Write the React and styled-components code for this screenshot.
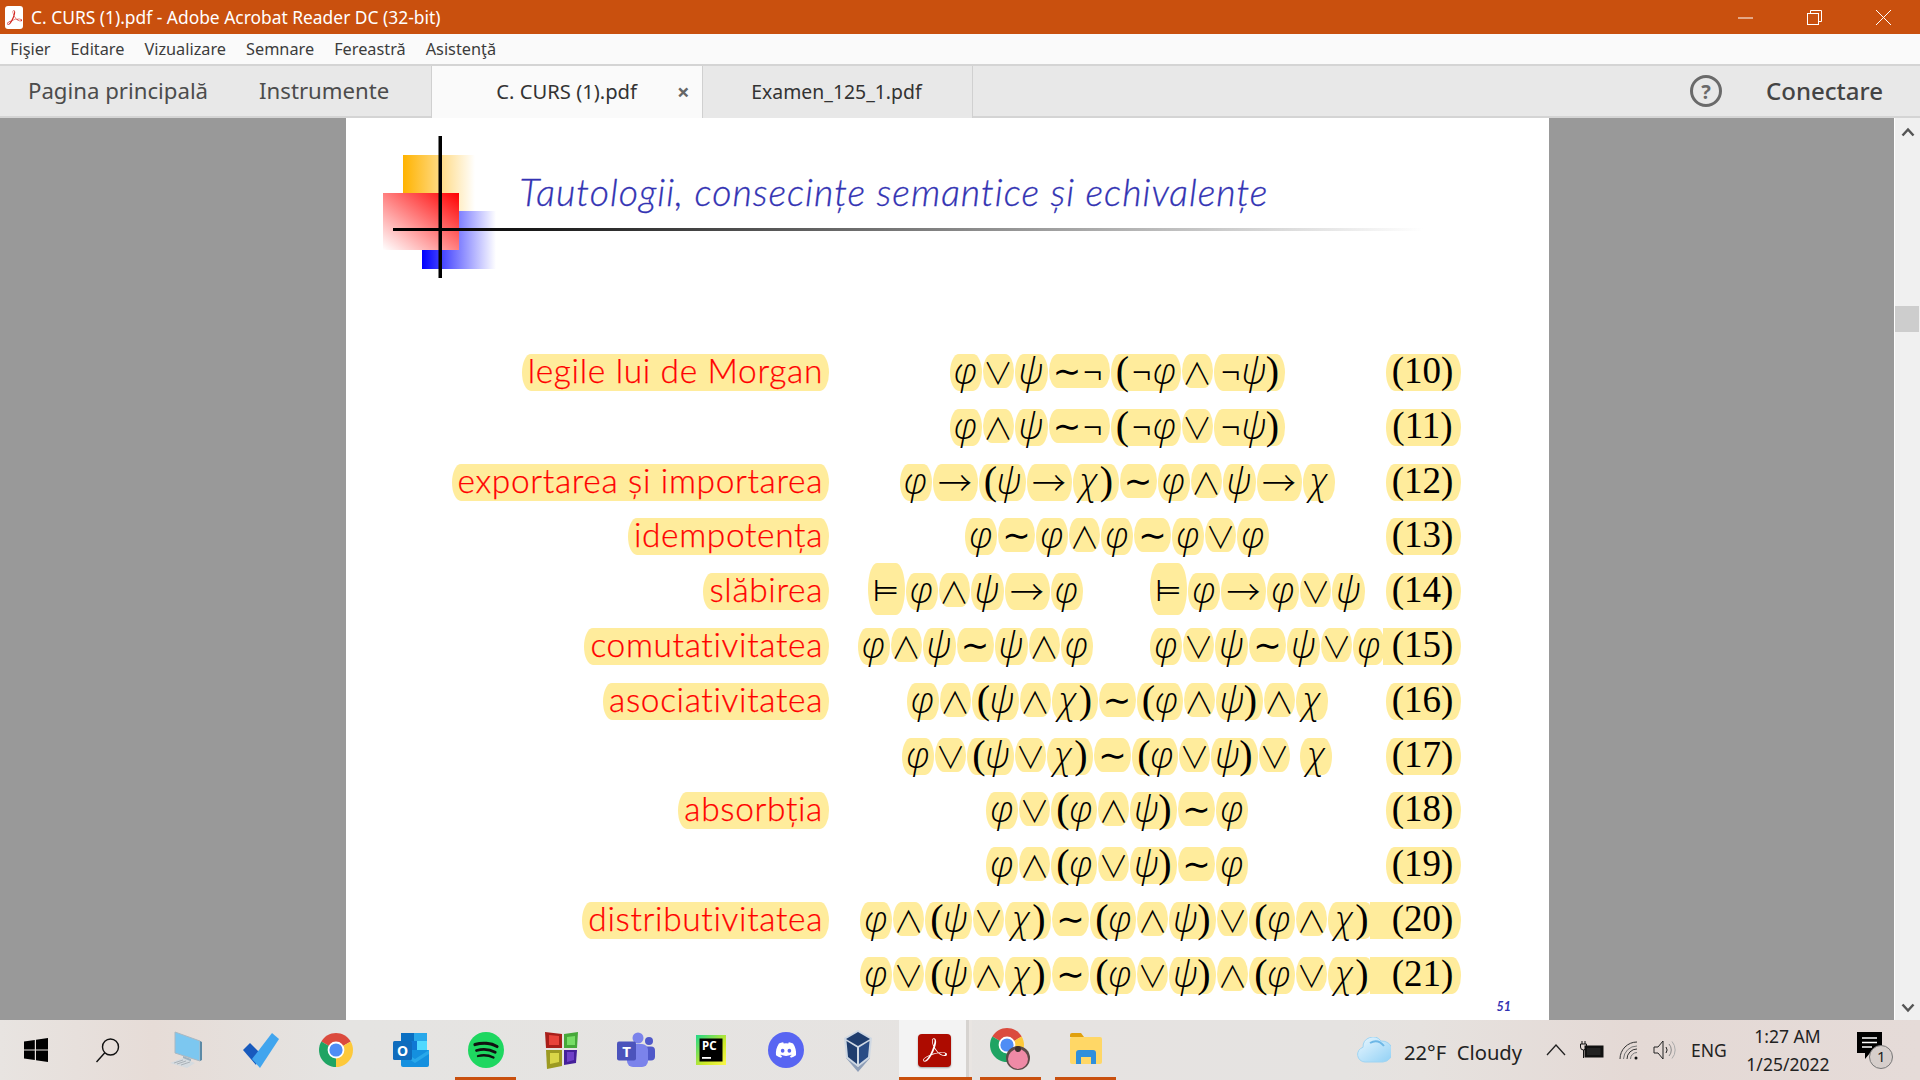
import React from 'react';
import styled, { createGlobalStyle } from 'styled-components';
import { SiAdobeacrobatreader } from 'react-icons/si';
import { FaDiscord } from 'react-icons/fa6';

const Global = createGlobalStyle`
  html, body { margin: 0; padding: 0; width: 1920px; height: 1080px; overflow: hidden; background: #999; }
  * { box-sizing: border-box; }
`;
const UI = `"Noto Sans", "Open Sans", sans-serif`;
const CJK = `"Noto Sans CJK JP", "DejaVu Sans", sans-serif`;
const SERIF = `"Liberation Serif", serif`;
const GREEK = `"Open Sans", "Noto Sans", sans-serif`;
const DEJAVU = `"DejaVu Sans", sans-serif`;

const Shell = styled.div`display:flex;flex-direction:column;width:1920px;height:1080px;font-family:${UI};`;
const TitleBar = styled.header`height:34px;background:#c9500e;color:#fff;display:flex;align-items:center;padding-left:5px;flex:none;`;
const AppBadge = styled.span`width:18px;height:23px;border-radius:3px;background:#fff;display:flex;align-items:center;justify-content:center;color:#d0201a;font-size:15px;`;
const TitleText = styled.span`font-size:17.4px;margin-left:8px;flex:1;white-space:nowrap;`;
const WinControls = styled.div`display:flex;align-items:center;gap:54px;padding-right:29px;`;
const MenuBar = styled.nav`height:30px;background:#fafafa;display:flex;align-items:center;padding-left:10px;gap:20px;font-size:16.3px;color:#3c3c3c;flex:none;`;
const TabBar = styled.div`height:54px;background:#e8e8e8;border-top:2px solid #d4d4d4;border-bottom:2px solid #d4d4d4;display:flex;align-items:stretch;flex:none;color:#4c4c4c;`;
const NavTab = styled.div`display:flex;align-items:center;font-size:22.2px;margin-left:${p => p.$ml}px;white-space:nowrap;padding-bottom:2px;`;
const DocTab = styled.div`
  width:${p => p.$w}px;display:flex;align-items:center;font-size:${p => p.$size}px;white-space:nowrap;padding:0 0 2px ${p => p.$pl}px;margin-bottom:-2px;
  background:${p => (p.$active ? '#fafafa' : '#e8e8e8')};
  border-left:${p => (p.$active ? '1px solid #d0d0d0' : 'none')};
  border-right:1px solid #d0d0d0;
  color:#333;
`;
const CloseX = styled.span`margin-left:40px;font-size:22px;font-weight:700;color:#666;`;
const Spacer = styled.div`flex:1;`;
const Help = styled.div`width:32px;height:32px;border:3px solid #6a6a6a;border-radius:50%;align-self:center;display:flex;align-items:center;justify-content:center;font-size:20px;font-weight:700;color:#6a6a6a;margin-right:44px;`;
const Connect = styled.div`align-self:center;font-size:24px;font-weight:500;margin-right:37px;color:#444;padding-bottom:2px;`;

const Workspace = styled.main`flex:1;min-height:0;display:flex;background:#999;overflow:hidden;`;
const Gutter = styled.div`flex:${p => (p.$w ? `0 0 ${p.$w}px` : 1)};`;
const Page = styled.section`width:1203px;background:#fff;height:902px;overflow:hidden;flex:none;padding-top:18px;`;
const Head = styled.div`display:flex;padding-left:37px;`;
const Logo = styled.svg`flex:none;overflow:visible;display:block;`;
const SlideTitle = styled.h1`margin:33px 0 0 23.500px;font:italic 300 37.5px/46px Lato, sans-serif;color:#3333b3;white-space:nowrap;height:46px;letter-spacing:1px;-webkit-text-stroke:.3px #3333b3;`;
const Rows = styled.div`margin-top:76px;display:grid;grid-auto-rows:54.8px;`;
const Row = styled.div`display:grid;grid-template-columns:483px 19px 538px 75px;align-items:start;`;
const LabelCell = styled.div`display:flex;justify-content:flex-end;grid-column:1;`;
const Label = styled.span`
  background:#ffec9c;color:#ff0000;height:37px;padding:0 6px;border-radius:9px / 50%;
  font:300 33.5px/32px Lato, sans-serif;letter-spacing:.65px;white-space:nowrap;-webkit-text-stroke:.25px #ff0000;
`;
const Formula = styled.div`grid-column:3;display:flex;justify-content:center;gap:1px;height:37px;`;
const PairCell = styled.div`grid-column:3;display:grid;grid-template-columns:254px 1fr;column-gap:48px;`;
const Half = styled.div`display:flex;gap:1px;height:37px;justify-content:${p => (p.$left ? 'flex-start' : 'center')};`;
const Atom = styled.span`
  display:inline-flex;justify-content:center;background:#ffec9c;padding:0 5px;flex:none;
  height:${p => p.$h}px;margin-top:${p => p.$top}px;border-radius:9px / 50%;
  margin-right:${p => p.$mr || 0}px;
`;
const Glyph = styled.span`
  display:inline-flex;justify-content:center;width:${p => p.$w}px;color:#000;line-height:${p => p.$lh || 33}px;height:37px;white-space:nowrap;
  font-family:${p => p.$font};
  font-size:${p => p.$size}px;font-style:${p => (p.$it ? 'italic' : 'normal')};
  font-weight:${p => p.$wt || 400};
`;
const Num = styled.div`
  grid-column:4;height:37px;background:#ffec9c;border-radius:${p => (p.$ext ? '0 9px 9px 0 / 0 50% 50% 0' : '9px / 50%')};text-align:center;
  margin-left:${p => -(p.$ext || 0)}px;padding:0 2px 0 ${p => p.$ext || 0}px;
  font:400 37px/33px "Liberation Serif", serif;color:#000;
`;
const PageNo = styled.div`text-align:right;padding-right:38px;margin-top:-12px;font:italic 700 12.5px/14px Lato, sans-serif;color:#3333b3;`;

const Scroll = styled.aside`flex:0 0 26px;background:#f0f0f0;border-left:1px solid #fff;display:flex;flex-direction:column;align-items:center;padding-top:9px;`;
const Thumb = styled.div`width:24px;height:26px;background:#cdcdcd;margin:169px 1px 0 0;`;

const Taskbar = styled.footer`height:60px;flex:none;display:flex;align-items:stretch;
  background:linear-gradient(90deg,#e8e4e1 0%,#e6dcd7 8%,#e5e4e2 18%,#e6e3e1 55%,#e5e3e1 70%,#e6e2df 74%,#e4d9d5 85%,#e5dbd8 100%);`;
const StartBtn = styled.div`width:72px;display:flex;align-items:center;justify-content:center;flex:none;`;
const TaskIcons = styled.div`display:flex;gap:14px;margin-left:11px;`;
const TaskBtn = styled.div`
  width:${p => p.$w || 61}px;display:flex;align-items:center;justify-content:center;flex:none;
  margin:0 ${p => p.$mx || 0}px;padding-right:${p => p.$pr || 0}px;
  border-bottom:3px solid ${p => (p.$on ? '#c9500e' : 'transparent')};
  border-top:3px solid transparent;
  background:${p => (p.$hi ? 'linear-gradient(90deg,#f3f3f3 0,#f3f3f3 67px,#d6d3d0 67px,#d6d3d0 70px,#e9e5e2 70px)' : 'transparent')};
`;
const AcroIcon = styled.div`width:33px;height:33px;background:#ad0b00;border-radius:4px;color:#fff;display:flex;align-items:center;justify-content:center;font-size:24px;box-shadow:0 1px 2px #0005;margin-left:2px;`;
const DiscordIcon = styled.div`width:36px;height:36px;background:#5865f2;border-radius:50%;color:#fff;display:flex;align-items:center;justify-content:center;font-size:22px;`;
const Tray = styled.div`flex:1;display:flex;align-items:center;color:#111;padding-left:${p => p.$pl}px;`;
const Weather = styled.span`font-size:20.2px;margin-left:13px;white-space:pre;margin-top:3px;color:#222;`;
const TrayGap = styled.span`display:inline-flex;margin-left:${p => p.$ml}px;`;
const Lang = styled.span`font-size:17.5px;margin-left:15px;color:#222;`;
const Clock = styled.div`margin-left:19.5px;width:82px;text-align:center;font-size:17.5px;line-height:28px;color:#222;white-space:nowrap;`;
const NotifyWrap = styled.div`margin-left:29px;position:relative;width:36px;height:36px;`;
const Badge = styled.span`position:absolute;right:0;bottom:-1px;width:24px;height:24px;border-radius:50%;border:1.5px solid #777;background:#d6cecb;font-size:15px;line-height:21px;text-align:center;color:#222;`;

const SPEC = {
  'φ': { w: 22, it: 1, size: 36, font: GREEK, wt: 300 }, 'ψ': { w: 23, it: 1, size: 36, font: GREEK, wt: 300 }, 'χ': { w: 22, it: 1, size: 36, font: GREEK, wt: 300 },
  '∨': { w: 21, size: 30, font: CJK, wt: 300, lh: 35 }, '∧': { w: 21, size: 30, font: CJK, wt: 300, lh: 35 }, '∼': { w: 27, size: 34, font: DEJAVU, lh: 35 },
  '→': { w: 35, size: 34, font: CJK, wt: 300, lh: 35 }, '(': { w: 14, size: 40, font: SERIF, lh: 33 }, ')': { w: 14, size: 40, font: SERIF, lh: 33 },
  '¬': { w: 24, size: 34, font: SERIF, lh: 35 }, '⊨': { w: 27, size: 30, font: DEJAVU, lh: 35 },
};
const SHORT = new Set(['∨', '∧']);
function Tok({ t }) {
  const gap = t.endsWith('_');
  const chars = Array.from(gap ? t.slice(0, -1) : t);
  const single = chars.length === 1 ? chars[0] : null;
  const turn = single === '⊨';
  const h = turn ? 52 : single && SHORT.has(single) ? 34 : single === '∼' || t === '∼¬' ? 34 : 37;
  return (
    <Atom $h={h} $top={turn ? -10 : 0} $mr={gap ? 9 : 0}>
      {chars.map((c, i) => {
        const s = SPEC[c];
        return <Glyph key={i} $w={s.w} $it={s.it} $font={s.font} $wt={s.wt} $lh={s.lh} $size={s.size} style={turn ? { marginTop: 10 } : undefined}>{c}</Glyph>;
      })}
    </Atom>
  );
}
const toks = s => s.split(' ').map((t, i) => <Tok key={i} t={t} />);

const DATA = [
  ['legile lui de Morgan', 'φ ∨ ψ ∼¬ (¬φ ∧ ¬ψ)', '(10)'],
  ['', 'φ ∧ ψ ∼¬ (¬φ ∨ ¬ψ)', '(11)'],
  ['exportarea și importarea', 'φ → (ψ → χ) ∼ φ ∧ ψ → χ', '(12)'],
  ['idempotența', 'φ ∼ φ ∧ φ ∼ φ ∨ φ', '(13)'],
  ['slăbirea', ['⊨ φ ∧ ψ → φ', '⊨ φ → φ ∨ ψ'], '(14)'],
  ['comutativitatea', ['φ ∧ ψ ∼ ψ ∧ φ', 'φ ∨ ψ ∼ ψ ∨ φ'], '(15)', 3],
  ['asociativitatea', 'φ ∧ (ψ ∧ χ) ∼ (φ ∧ ψ) ∧ χ', '(16)'],
  ['', 'φ ∨ (ψ ∨ χ) ∼ (φ ∨ ψ) ∨_ χ', '(17)'],
  ['absorbția', 'φ ∨ (φ ∧ ψ) ∼ φ', '(18)'],
  ['', 'φ ∧ (φ ∨ ψ) ∼ φ', '(19)'],
  ['distributivitatea', 'φ ∧ (ψ ∨ χ) ∼ (φ ∧ ψ) ∨ (φ ∧ χ)', '(20)', 16],
  ['', 'φ ∨ (ψ ∧ χ) ∼ (φ ∨ ψ) ∧ (φ ∨ χ)', '(21)', 16],
];

const LogoArt = () => (
  <Logo width="113" height="142" viewBox="0 0 113 142">
    <defs>
      <linearGradient id="o" x1="0" x2="1" y1="0" y2="0"><stop offset="0" stopColor="#ffb300" /><stop offset="1" stopColor="#fff" /></linearGradient>
      <linearGradient id="b" x1="0" x2="1" y1="0" y2="0"><stop offset="0" stopColor="#0000ff" /><stop offset="1" stopColor="#fff" /></linearGradient>
      <linearGradient id="r" x1="1" x2="0" y1="0" y2="1"><stop offset="0" stopColor="#ff0000" /><stop offset="1" stopColor="#fff" /></linearGradient>
      <linearGradient id="l" gradientUnits="userSpaceOnUse" x1="50" x2="1040" y1="0" y2="0"><stop offset="0" stopColor="#000" /><stop offset="1" stopColor="#fff" /></linearGradient>
    </defs>
    <rect x="20" y="19" width="72" height="76" fill="url(#o)" />
    <rect x="39" y="75" width="74" height="58" fill="url(#b)" />
    <rect x="0" y="57" width="76" height="57" fill="url(#r)" />
    <rect x="10" y="92" width="1030" height="3" fill="url(#l)" />
    <rect x="55.5" y="0" width="3.500" height="142" fill="#000" />
  </Logo>
);

const WinBtns = () => (
  <WinControls>
    <svg width="15" height="15" viewBox="0 0 15 15"><path d="M0 8h15" stroke="#fff" strokeWidth="1" /></svg>
    <svg width="15" height="15" viewBox="0 0 15 15" fill="none" stroke="#fff"><rect x=".5" y="3.5" width="11" height="11" /><path d="M3.500 3V.5h11v11H12" /></svg>
    <svg width="15" height="15" viewBox="0 0 15 15" stroke="#fff"><path d="M0 0l15 15M15 0L0 15" /></svg>
  </WinControls>
);

const Ic = {
  Windows: () => <svg width="24" height="24" viewBox="0 0 24 24" fill="#000"><path d="M0 3.400 10.800 2v9.400H0zM12 1.800 24 0v11.400H12zM0 12.600h10.800V22L0 20.600zM12 12.600h12V24l-12-1.800z" /></svg>,
  Search: () => <svg width="26" height="26" viewBox="0 0 26 26" fill="none" stroke="#111" strokeWidth="1.400"><circle cx="15.500" cy="10" r="8" /><path d="M9.800 15.800 1.500 25" /></svg>,
  PC: () => <svg width="34" height="38" viewBox="0 0 34 38"><path d="M6 1l25 9v20L6 22z" fill="#7cc7f0" stroke="#aab8c2" /><path d="M31 10v20l2-1V11z" fill="#5c8aa6" /><path d="M14 25l8 3v3l-8-2z" fill="#9fb2bf" /><path d="M1 32l13-5 12 5-8 5z" fill="#d5dbe0" /><path d="M5 32l9-3M8 33l9-3M12 34l9-3" stroke="#aab2b8" /></svg>,
  Todo: () => <svg width="36" height="36" viewBox="0 0 36 36"><path d="M0 18l7-7 10 10-4 12z" fill="#185abd" /><path d="M17 36 9 27 29 1l7 6z" fill="#41a5ee" /></svg>,
  Chrome: ({ s = 34 }) => (
    <svg width={s} height={s} viewBox="0 0 34 34">
      <path d="M2.300 8.500A17 17 0 0 1 31.700 8.500L17 17z" fill="#db4b3e" />
      <path d="M31.700 8.500A17 17 0 0 1 17 34L17 17z" fill="#fdc93b" />
      <path d="M17 34A17 17 0 0 1 2.300 8.500L17 17z" fill="#1fa463" />
      <circle cx="17" cy="17" r="8.400" fill="#fff" /><circle cx="17" cy="17" r="6.600" fill="#4f8df5" />
    </svg>
  ),
  Outlook: () => <svg width="36" height="36" viewBox="0 0 36 36"><rect x="8" y="1" width="26" height="16" fill="#0a6fc2" /><rect x="21" y="1" width="13" height="9" fill="#28a8ea" /><rect x="14" y="9" width="10" height="9" fill="#0f78d4" /><rect x="24" y="9" width="10" height="9" fill="#50d9ff" /><path d="M8 18h28v15a2 2 0 0 1-2 2H10a2 2 0 0 1-2-2z" fill="#1490df" /><path d="M8 18l14 9 14-9v4l-14 9-14-9z" fill="#28a8ea" /><rect x="0" y="9" width="19" height="19" rx="1.500" fill="#0f6cbd" /><text x="9.500" y="24" textAnchor="middle" fontSize="14" fontWeight="700" fill="#fff" fontFamily="Noto Sans">O</text></svg>,
  Spotify: () => <svg width="36" height="36" viewBox="0 0 36 36"><circle cx="18" cy="18" r="18" fill="#1ed760" /><g fill="none" stroke="#111" strokeLinecap="round"><path d="M7 12.500c7-2 16-1.600 22 2" strokeWidth="3.200" /><path d="M8.500 18.500c6-1.600 13.500-1 18.700 1.800" strokeWidth="2.800" /><path d="M10 24c5-1.200 11-.7 15.500 1.600" strokeWidth="2.300" /></g></svg>,
  Cube: () => <svg width="34" height="38" viewBox="0 0 34 38"><path d="M1 1l17 2v14H2z" fill="#a81f1a" /><path d="M5 4l10 1v9H5z" fill="#e8433a" /><path d="M20 3l14-2-1 16H20z" fill="#46a83a" /><path d="M23 6l8-1v9h-8z" fill="#77dd66" /><path d="M2 19h16v16l-15 3z" fill="#9c9a22" /><path d="M6 22h9v9l-9 2z" fill="#d9d648" /><path d="M20 19h13l-1 13-12 2z" fill="#45209a" /><path d="M23 21h7v8l-7 2z" fill="#7040c8" /></svg>,
  Teams: () => <svg width="38" height="36" viewBox="0 0 38 36"><circle cx="21" cy="6" r="5.500" fill="#7b83eb" /><circle cx="32" cy="9" r="4" fill="#5059c9" /><rect x="26" y="14.500" width="12" height="14" rx="4" fill="#5059c9" /><rect x="10" y="12" width="21" height="23" rx="6" fill="#7b83eb" /><rect x="0" y="9.500" width="19" height="19" rx="2" fill="#4b53bc" /><text x="9.500" y="24.500" textAnchor="middle" fontSize="15" fontWeight="700" fill="#fff" fontFamily="Noto Sans">T</text></svg>,
  PyCharm: () => <svg width="30" height="30" viewBox="0 0 30 30"><defs><linearGradient id="pc" x1="0" y1="0" x2="1" y2="1"><stop offset="0" stopColor="#21d789" /><stop offset=".6" stopColor="#cce82a" /><stop offset="1" stopColor="#fcf84a" /></linearGradient></defs><rect width="30" height="30" fill="url(#pc)" /><rect x="3.500" y="3.500" width="23" height="23" fill="#000" /><text x="6" y="15" fontSize="11.500" fontWeight="700" fill="#fff" fontFamily="Noto Sans">PC</text><rect x="6" y="22" width="9" height="1.800" fill="#fff" /></svg>,
  VBox: () => <svg width="30" height="44" viewBox="0 0 30 44" style={{ marginLeft: -6 }}><path d="M3 24l12 15 12-15v6L15 44 3 30z" fill="#8f9fb8" /><path d="M15 2l14 8-2 20-12 9-12-9-2-20z" fill="#cfd8e3" /><path d="M15 4 3 11l12 7 12-7z" fill="#1f3d6e" /><path d="M3.500 13l10.500 6.500V36l-9-7z" fill="#1f3d6e" /><path d="M26.500 13 16 19.500V36l9-7z" fill="#2a4d86" /></svg>,
  Avatar: () => <svg width="42" height="46" viewBox="0 0 42 46"><g transform="translate(0,1)"><path d="M2.300 8.500A17 17 0 0 1 31.700 8.500L17 17z" fill="#db4b3e" /><path d="M31.700 8.500A17 17 0 0 1 17 34L17 17z" fill="#fdc93b" /><path d="M17 34A17 17 0 0 1 2.300 8.500L17 17z" fill="#1fa463" /><circle cx="17" cy="17" r="8.400" fill="#fff" /><circle cx="17" cy="17" r="6.600" fill="#4f8df5" /></g><circle cx="28" cy="31" r="12" fill="#5b4a48" /><circle cx="28" cy="32" r="10" fill="#ef8aa6" /><circle cx="28" cy="22" r="3" fill="#3a2e2d" /></svg>,
  Folder: () => <svg width="34" height="34" viewBox="0 0 34 34"><path d="M1 2a2 2 0 0 1 2-2h9l3 4h-14z" fill="#e0a00d" /><rect x="1" y="4" width="32" height="27" rx="2" fill="#ffd766" /><path d="M7 31V20a3 3 0 0 1 3-3h14a3 3 0 0 1 3 3v11h-5v-7H12v7z" fill="#2f8fdc" /></svg>,
  Cloud: () => <svg width="34" height="26" viewBox="0 0 34 26"><defs><linearGradient id="cl" x1="0" y1="0" x2="1" y2="1"><stop offset="0" stopColor="#eaf7ff" /><stop offset="1" stopColor="#8fd0f5" /></linearGradient></defs><path d="M8 25a7.500 7.500 0 0 1-2-14.700A10 10 0 0 1 24 4a8 8 0 0 1 2 21z" fill="url(#cl)" stroke="#9fd4f2" /><path d="M13 6c5-3 10-2 14 3" stroke="#6db7e6" strokeWidth="2" fill="none" /></svg>,
  Chevron: () => <svg width="20" height="12" viewBox="0 0 20 12" fill="none" stroke="#222" strokeWidth="1.300"><path d="M1 11 10 1l9 10" /></svg>,
  Battery: () => <svg width="25" height="18" viewBox="0 0 25 18"><path d="M3 0v3M6 0v3M1.500 3h6v3a3 3 0 0 1-6 0zM4.500 9v8" stroke="#111" fill="none" /><rect x="6" y="5" width="18" height="11" fill="#111" stroke="#111" /><rect x="8" y="7" width="13.500" height="7" fill="#222" /></svg>,
  Wifi: () => <svg width="19" height="19" viewBox="0 0 19 19" fill="none" stroke="#333"><path d="M1 18A17 17 0 0 1 18 1" /><path d="M4.500 18A13.500 13.500 0 0 1 18 5" stroke="#777" /><path d="M8 18A10 10 0 0 1 18 8" stroke="#333" /><path d="M11.500 18A6.500 6.500 0 0 1 18 11.500" stroke="#777" /><circle cx="17" cy="17" r="1.500" fill="#111" stroke="none" /></svg>,
  Volume: () => <svg width="23" height="20" viewBox="0 0 23 20" fill="none" stroke="#222"><path d="M1 7h4l5-6v18l-5-6H1z" /><path d="M13 7a5 5 0 0 1 0 6" /><path d="M16 4a9 9 0 0 1 0 12" stroke="#888" /><path d="M19 1.500a13 13 0 0 1 0 17" stroke="#aaa" /></svg>,
  Bubble: () => <svg width="25" height="30" viewBox="0 0 25 30"><path d="M0 0h25v21H13l-5 6v-6H0z" fill="#000" /><path d="M5 6h15M5 10.500h15M5 15h10" stroke="#fff" strokeWidth="1.300" /></svg>,
};

export default function App() {
  return (
    <Shell>
      <Global />
      <TitleBar>
        <AppBadge><SiAdobeacrobatreader /></AppBadge>
        <TitleText>C. CURS (1).pdf - Adobe Acrobat Reader DC (32-bit)</TitleText>
        <WinBtns />
      </TitleBar>
      <MenuBar>
        {['Fişier', 'Editare', 'Vizualizare', 'Semnare', 'Fereastră', 'Asistenţă'].map(m => <span key={m}>{m}</span>)}
      </MenuBar>
      <TabBar>
        <NavTab $ml={28}>Pagina principală</NavTab>
        <NavTab $ml={51}>Instrumente</NavTab>
        <Gutter $w={42} />
        <DocTab $active $w={272} $pl={64} $size={20.2}>C. CURS (1).pdf<CloseX>×</CloseX></DocTab>
        <DocTab $w={270} $pl={48} $size={19.4}>Examen_125_1.pdf</DocTab>
        <Spacer />
        <Help>?</Help>
        <Connect>Conectare</Connect>
      </TabBar>
      <Workspace>
        <Gutter $w={346} />
        <Page>
          <Head>
            <LogoArt />
            <SlideTitle>Tautologii, consecințe semantice și echivalențe</SlideTitle>
          </Head>
          <Rows>
            {DATA.map(([label, f, n, ext], i) => (
              <Row key={i}>
                <LabelCell>{label && <Label>{label}</Label>}</LabelCell>
                {Array.isArray(f) ? (
                  <PairCell>
                    <Half>{toks(f[0])}</Half>
                    <Half $left>{toks(f[1])}</Half>
                  </PairCell>
                ) : (
                  <Formula>{toks(f)}</Formula>
                )}
                <Num $ext={ext}>{n}</Num>
              </Row>
            ))}
          </Rows>
          <PageNo>51</PageNo>
        </Page>
        <Gutter />
        <Scroll>
          <svg width="14" height="10" viewBox="0 0 14 10" fill="none" stroke="#555" strokeWidth="2.500"><path d="M1.500 8.500 7 2.500l5.500 6" /></svg>
          <Thumb />
          <Spacer />
          <svg width="14" height="10" viewBox="0 0 14 10" fill="none" stroke="#555" strokeWidth="2.500" style={{ marginBottom: 7 }}><path d="M1.500 1.500 7 7.500l5.500-6" /></svg>
        </Scroll>
      </Workspace>
      <Taskbar>
        <StartBtn><Ic.Windows /></StartBtn>
        <StartBtn><Ic.Search /></StartBtn>
        <TaskIcons>
          <TaskBtn><Ic.PC /></TaskBtn>
          <TaskBtn><Ic.Todo /></TaskBtn>
          <TaskBtn><Ic.Chrome /></TaskBtn>
          <TaskBtn><Ic.Outlook /></TaskBtn>
          <TaskBtn $on><Ic.Spotify /></TaskBtn>
          <TaskBtn><Ic.Cube /></TaskBtn>
          <TaskBtn><Ic.Teams /></TaskBtn>
          <TaskBtn><Ic.PyCharm /></TaskBtn>
          <TaskBtn><DiscordIcon><FaDiscord /></DiscordIcon></TaskBtn>
          <TaskBtn><Ic.VBox /></TaskBtn>
          <TaskBtn $w={73} $mx={-6} $on $hi $pr={4}><AcroIcon><SiAdobeacrobatreader /></AcroIcon></TaskBtn>
          <TaskBtn $on><Ic.Avatar /></TaskBtn>
          <TaskBtn $on><Ic.Folder /></TaskBtn>
        </TaskIcons>
        <Tray $pl={241}>
          <Ic.Cloud />
          <Weather>22°F  Cloudy</Weather>
          <TrayGap $ml={24}><Ic.Chevron /></TrayGap>
          <TrayGap $ml={13}><Ic.Battery /></TrayGap>
          <TrayGap $ml={15}><Ic.Wifi /></TrayGap>
          <TrayGap $ml={15}><Ic.Volume /></TrayGap>
          <Lang>ENG</Lang>
          <Clock>1:27 AM<br />1/25/2022</Clock>
          <NotifyWrap><Ic.Bubble /><Badge>1</Badge></NotifyWrap>
        </Tray>
      </Taskbar>
    </Shell>
  );
}
